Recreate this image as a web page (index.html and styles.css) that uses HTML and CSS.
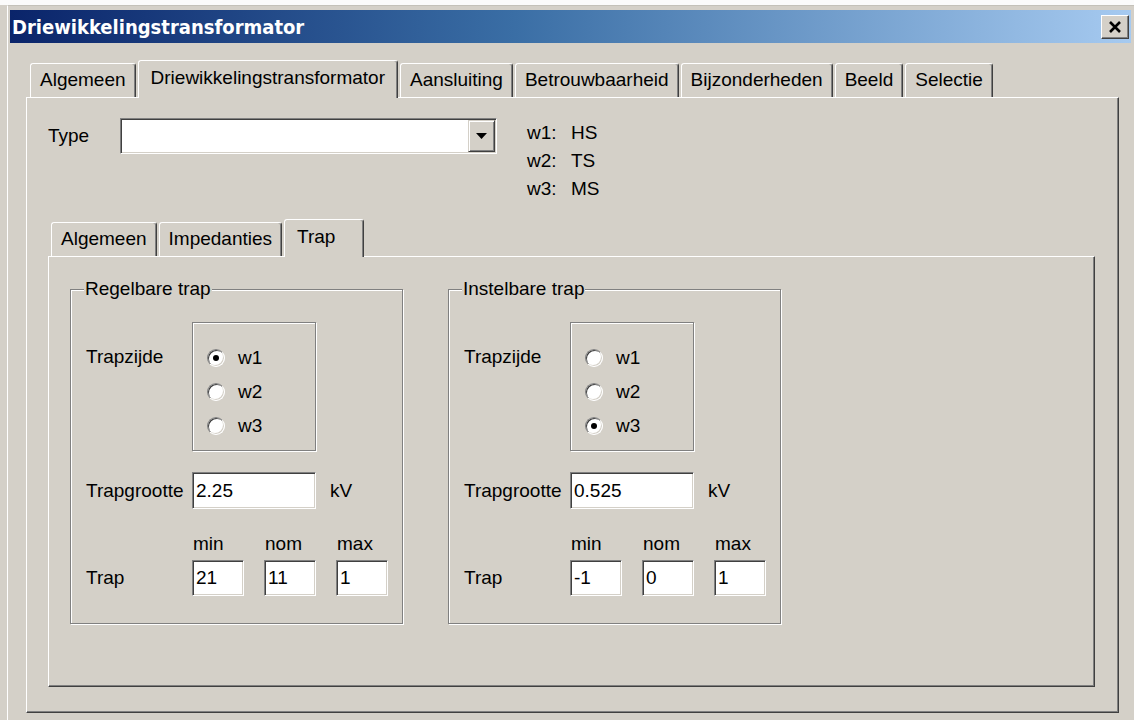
FILE: index.html
```html
<!DOCTYPE html>
<html lang="nl">
<head>
<meta charset="utf-8">
<title>Driewikkelingstransformator</title>
<link rel="stylesheet" href="styles.css">
</head>
<body>
<div class="window">
  <div class="frame">
    <header class="titlebar">
      <span class="title">Driewikkelingstransformator</span>
      <button class="close" type="button" aria-label="Sluiten">
        <svg width="14" height="12" viewBox="0 0 14 12"><path d="M2 1 L12 11 M12 1 L2 11" stroke="#000" stroke-width="2.6" fill="none"/></svg>
      </button>
    </header>
    <div class="client">
      <div class="tabctl main-tabctl">
        <div class="tabs">
          <div class="tab">Algemeen</div>
          <div class="tab active">Driewikkelingstransformator</div>
          <div class="tab">Aansluiting</div>
          <div class="tab">Betrouwbaarheid</div>
          <div class="tab">Bijzonderheden</div>
          <div class="tab">Beeld</div>
          <div class="tab">Selectie</div>
        </div>
        <div class="page main-page">
          <div class="type-row">
            <span class="type-label">Type</span>
            <div class="combo">
              <div class="combo-value"></div>
              <div class="combo-btn">
                <svg width="11" height="6" viewBox="0 0 11 6"><polygon points="0,0 11,0 5.5,6" fill="#000"/></svg>
              </div>
            </div>
            <dl class="windings">
              <div class="winding"><dt>w1:</dt><dd>HS</dd></div>
              <div class="winding"><dt>w2:</dt><dd>TS</dd></div>
              <div class="winding"><dt>w3:</dt><dd>MS</dd></div>
            </dl>
          </div>

          <div class="tabctl sub-tabctl">
            <div class="tabs">
              <div class="tab">Algemeen</div>
              <div class="tab">Impedanties</div>
              <div class="tab active">Trap</div>
            </div>
            <div class="page sub-page">

              <section class="group">
                <h3 class="group-title">Regelbare trap</h3>
                <div class="side-row">
                  <span class="field-label side-label">Trapzijde</span>
                  <div class="radio-frame">
                    <div class="radio-item"><span class="radio checked"></span><span>w1</span></div>
                    <div class="radio-item"><span class="radio"></span><span>w2</span></div>
                    <div class="radio-item"><span class="radio"></span><span>w3</span></div>
                  </div>
                </div>
                <div class="size-row">
                  <span class="field-label">Trapgrootte</span>
                  <div class="edit edit-wide">2.25</div>
                  <span class="unit">kV</span>
                </div>
                <div class="steps">
                  <span></span>
                  <span class="step-head">min</span>
                  <span class="step-head">nom</span>
                  <span class="step-head">max</span>
                  <span class="step-label">Trap</span>
                  <div class="edit">21</div>
                  <div class="edit">11</div>
                  <div class="edit">1</div>
                </div>
              </section>

              <section class="group">
                <h3 class="group-title">Instelbare trap</h3>
                <div class="side-row">
                  <span class="field-label side-label">Trapzijde</span>
                  <div class="radio-frame">
                    <div class="radio-item"><span class="radio"></span><span>w1</span></div>
                    <div class="radio-item"><span class="radio"></span><span>w2</span></div>
                    <div class="radio-item"><span class="radio checked"></span><span>w3</span></div>
                  </div>
                </div>
                <div class="size-row">
                  <span class="field-label">Trapgrootte</span>
                  <div class="edit edit-wide">0.525</div>
                  <span class="unit">kV</span>
                </div>
                <div class="steps">
                  <span></span>
                  <span class="step-head">min</span>
                  <span class="step-head">nom</span>
                  <span class="step-head">max</span>
                  <span class="step-label">Trap</span>
                  <div class="edit">-1</div>
                  <div class="edit">0</div>
                  <div class="edit">1</div>
                </div>
              </section>

            </div>
          </div>
        </div>
      </div>
    </div>
  </div>
</div>
</body>
</html>
```

FILE: styles.css
```css
/* Classic 3D dialog: face #d4d0c8, highlight #fff, shadow #808080, dark shadow #404040 */
* { box-sizing: border-box; }

html, body {
  margin: 0;
  padding: 0;
}

body {
  width: 1134px;
  height: 720px;
  overflow: hidden;
  background: #d4d0c8;
  font-family: "Liberation Sans", Arial, sans-serif;
  font-size: 19px;
  color: #000;
}

/* window frame */
.window {
  height: 720px;
  border-top: 5px solid #fbfbfb;
}

.frame {
  height: 100%;
  margin-left: 7px;
  border-left: 1px solid #fff;
  border-top: 1px solid #c4c1b9;
  padding: 4px 3px 0 2px;
}

.titlebar {
  height: 33px;
  display: flex;
  align-items: center;
  justify-content: space-between;
  padding: 0 2px 0 2px;
  background: linear-gradient(to right, #0a246a 0%, #3a6ea5 45%, #a6caf0 100%);
}

.title {
  color: #fff;
  font-family: "DejaVu Sans Condensed", "DejaVu Sans", sans-serif;
  font-stretch: condensed;
  font-weight: bold;
  font-size: 20px;
  white-space: nowrap;
}

.close {
  width: 28px;
  height: 24px;
  padding: 0;
  margin: 0;
  display: flex;
  align-items: center;
  justify-content: center;
  background: #d4d0c8;
  border: 1px solid;
  border-color: #fff #404040 #404040 #fff;
  box-shadow: inset -1px -1px 0 #808080;
}

/* client area */
.client {
  padding: 17px 12px 0 16px;
}

/* tab controls */
.tabctl {
  display: flex;
  flex-direction: column;
}

.tabs {
  position: relative;
  z-index: 1;
  display: flex;
  align-items: flex-end;
  height: 38px;
  margin-bottom: -1px;
}

.main-tabctl > .tabs { padding-left: 4px; }
.sub-tabctl > .tabs { padding-left: 3px; }

.tab {
  height: 34px;
  margin-bottom: 1px;
  padding: 0 9px;
  border: 1px solid;
  border-bottom: 0;
  border-color: #fff #404040 transparent #fff;
  border-radius: 3px 3px 0 0;
  box-shadow: inset -1px 0 0 #808080;
  background: #d4d0c8;
  line-height: 32px;
  white-space: nowrap;
}

.tab + .tab { margin-left: 2px; }

.tab.active {
  height: 38px;
  margin-bottom: 0;
  padding: 0 12px;
  line-height: 33px;
}

.sub-tabctl .tab.active {
  min-width: 80px;
  text-align: left;
  padding-left: 12px;
}

.page {
  background: #d4d0c8;
  border: 1px solid;
  border-color: #fff #404040 #404040 #fff;
  box-shadow: inset -1px -1px 0 #808080;
}

.main-page {
  height: 616px;
  display: flex;
  flex-direction: column;
  padding: 20px 23px 25px 21px;
}

/* type selector */
.type-row {
  display: flex;
  align-items: flex-start;
}

.type-label {
  width: 72px;
  line-height: 36px;
}

.combo {
  display: flex;
  width: 377px;
  height: 36px;
  padding: 1px;
  background: #fff;
  border: 1px solid;
  border-color: #808080 #fff #fff #808080;
  box-shadow: inset 1px 1px 0 #404040, inset -1px -1px 0 #d4d0c8;
}

.combo-value { flex: 1; }

.combo-btn {
  width: 27px;
  display: flex;
  align-items: center;
  justify-content: center;
  background: #d4d0c8;
  border: 1px solid;
  border-color: #d4d0c8 #404040 #404040 #d4d0c8;
  box-shadow: inset 1px 1px 0 #fff, inset -1px -1px 0 #808080;
}

.windings {
  margin: 1px 0 0 30px;
  line-height: 28px;
}

.winding { display: flex; }
.winding dt { width: 44px; }
.winding dd { margin: 0; }

/* inner tab control */
.sub-tabctl {
  flex: 1;
  margin-top: 16px;
}

.sub-page {
  flex: 1;
  display: flex;
  align-items: flex-start;
  gap: 45px;
  padding: 32px 0 0 21px;
}

/* group boxes (etched frame) */
.group {
  position: relative;
  width: 333px;
  padding: 32px 0 27px 15px;
  border: 1px solid #808080;
  box-shadow: inset 1px 1px 0 #fff, 1px 1px 0 #fff;
}

.group-title {
  position: absolute;
  top: -12px;
  left: 13px;
  margin: 0;
  padding: 0 1px;
  background: #d4d0c8;
  font-size: 19px;
  font-weight: normal;
  line-height: 22px;
  white-space: nowrap;
}

.field-label {
  width: 106px;
  flex: none;
  line-height: 22px;
  white-space: nowrap;
}

.side-row {
  display: flex;
  align-items: flex-start;
}

.side-label { margin-top: 24px; }

.radio-frame {
  width: 124px;
  height: 129px;
  padding: 18px 0 0 14px;
  border: 1px solid #808080;
  box-shadow: inset 1px 1px 0 #fff, 1px 1px 0 #fff;
}

.radio-item {
  height: 34px;
  display: flex;
  align-items: center;
}

.radio {
  position: relative;
  flex: none;
  width: 18px;
  height: 18px;
  margin-right: 13px;
  border-radius: 50%;
  background: #fff;
  border: 1px solid;
  border-color: #808080 #fff #fff #808080;
  box-shadow: inset 1px 1px 0 #404040, inset -1px -1px 0 #d4d0c8;
}

.radio.checked::after {
  content: "";
  position: absolute;
  left: 5px;
  top: 5px;
  width: 6px;
  height: 6px;
  border-radius: 50%;
  background: #000;
}

.size-row {
  display: flex;
  align-items: center;
  margin-top: 21px;
}

.unit {
  margin-left: 14px;
}

/* sunken edit fields */
.edit {
  display: flex;
  align-items: center;
  height: 36px;
  padding: 0 3px;
  background: #fff;
  border: 1px solid;
  border-color: #808080 #fff #fff #808080;
  box-shadow: inset 1px 1px 0 #404040, inset -1px -1px 0 #d4d0c8;
  white-space: nowrap;
}

.edit-wide {
  width: 124px;
  height: 37px;
}

.steps {
  display: grid;
  grid-template-columns: 86px 52px 52px 52px;
  grid-template-rows: 22px 36px;
  column-gap: 20px;
  row-gap: 5px;
  margin-top: 24px;
  align-items: center;
}

.step-head {
  padding-left: 1px;
  line-height: 22px;
}

.step-label {
  line-height: 22px;
}
```
